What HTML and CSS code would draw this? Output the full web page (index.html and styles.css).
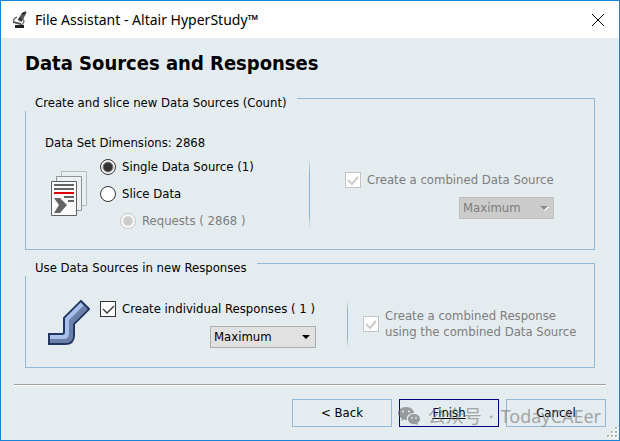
FILE: index.html
```html
<!DOCTYPE html>
<html lang="en">
<head>
  <meta charset="utf-8">
  <title>File Assistant - Altair HyperStudy</title>
  <link rel="stylesheet" href="styles.css">
</head>
<body>
  <div class="window">
    <header class="titlebar">
      <svg class="app-icon" width="16" height="18" viewBox="0 0 16 18">
        <path d="M10 2l4-2 .5 2-5 9-4-2z" fill="#555"/>
        <path d="M10 3l3-1.500M7 7l3 2" stroke="#222" stroke-width="1.500" fill="none"/>
        <path d="M5 6c-4 2-4 4-3 5M11 8c2 3 0 5-2 6" stroke="#777" stroke-width="1.500" fill="none"/>
        <path d="M1 10l8 2v2l-8-2z" fill="#555"/>
        <path d="M3 14h9v3H3z" fill="#222"/>
      </svg>
      <span class="caption">File Assistant - Altair HyperStudy™</span>
      <button type="button" class="close" aria-label="Close">
        <svg width="12" height="12" viewBox="0 0 12 12"><path d="M0 0l12 12M12 0L0 12" stroke="#000" stroke-width="1"/></svg>
      </button>
    </header>

    <form class="content">
      <h1>Data Sources and Responses</h1>

      <fieldset class="group">
        <legend>Create and slice new Data Sources (Count)</legend>
        <p class="dimensions">Data Set Dimensions: 2868</p>
        <div class="row sources">
          <svg class="picture docs" width="38" height="46" viewBox="0 0 38 46">
            <path d="M11.500.5h25v34h-25z" fill="#e9eef1" stroke="#b5babd"/>
            <path d="M6.500 5.500h25v34h-25z" fill="#eef1f3" stroke="#8f9395"/>
            <path d="M1.500 10.500h25v34h-25z" fill="#fafafa" stroke="#606060"/>
            <path d="M4 13h20v2H4zM4 17h20v2H4zM14 25h10v2H14zM18 29h6v2h-6z" fill="#646464"/>
            <path d="M4 21h20v2H4z" fill="#e00000"/>
            <path d="M4 27h6l7 7-7 8H4l5-8z" fill="#646464"/>
          </svg>
          <div class="options">
            <label class="option"><input type="radio" name="source" checked>Single Data Source (1)</label>
            <label class="option"><input type="radio" name="source">Slice Data</label>
            <label class="option nested disabled"><input type="radio" name="requests" checked disabled>Requests ( 2868 )</label>
          </div>
          <div class="divider"></div>
          <div class="combined">
            <label class="option disabled"><input type="checkbox" checked disabled>Create a combined Data Source</label>
            <div class="select narrow">
              <select aria-label="Combined source type" disabled><option>Maximum</option></select>
              <svg width="9" height="6" viewBox="0 0 9 6"><path d="M1 2h8L5 6z" fill="#fff"/><path d="M0 1h8L4 5z" fill="#8a8a8a"/></svg>
            </div>
          </div>
        </div>
      </fieldset>

      <fieldset class="group">
        <legend>Use Data Sources in new Responses</legend>
        <div class="row responses">
          <svg class="picture" width="42" height="46" viewBox="0 0 42 46">
            <path d="M1 34h13q2 0 2-2V18L33 1l8 8-15 15v11q0 9-9 9H1z" fill="#7389b5" stroke="#22365f" stroke-width="2"/>
            <path d="M2 37h13q4 0 4-4V19L34 4" fill="none" stroke="#a9bfec" stroke-width="4"/>
            <path d="M2 41h15q6 0 6-6V23L38 8" fill="none" stroke="#6a80ab" stroke-width="4"/>
          </svg>
          <div class="individual">
            <label class="option"><input type="checkbox" checked>Create individual Responses ( 1 )</label>
            <div class="select">
              <select aria-label="Response type"><option>Maximum</option></select>
              <svg width="9" height="6" viewBox="0 0 9 6"><path d="M0 1h8L4 5z" fill="#000"/></svg>
            </div>
          </div>
          <div class="divider"></div>
          <label class="option disabled two-line"><input type="checkbox" checked disabled><span>Create a combined Response<br>using the combined Data Source</span></label>
        </div>
      </fieldset>

      <footer class="buttons">
        <button type="button">&lt; Back</button>
        <button type="submit" class="default">Finish</button>
        <button type="button">Cancel</button>
      </footer>
    </form>

    <div class="watermark">
      <svg width="24" height="20" viewBox="0 0 24 20">
        <path fill-rule="evenodd" d="M9 1c5 0 8 3 8 6-5 0-8 3-7 7-1 0-2 0-3-.5L4 15l1-2.500C2 11 1 9 1 7.500 1 4 4 1 9 1zM6 4.500a1 1 0 100 2 1 1 0 000-2zm6 0a1 1 0 100 2 1 1 0 000-2z"/>
        <path fill-rule="evenodd" d="M17 8c4 0 6 2.500 6 5 0 1.500-1 3-2.500 4l.5 2-2.500-1c-4 1-7.500-1.500-7.500-5 0-2.500 2.500-5 6-5zm-2 3a.9.9 0 100 1.800.9.9 0 000-1.800zm4 0a.9.9 0 100 1.800.9.9 0 000-1.800z"/>
      </svg>
      <span>公众号</span>
      <span>·</span>
      <span>TodayCAEer</span>
    </div>
    <svg class="grip" width="14" height="14" viewBox="0 0 14 14">
      <path d="M10 1h3v3h-3zM6 5h3v3H6zM10 5h3v3h-3zM2 9h3v3H2zM6 9h3v3H6zM10 9h3v3h-3z" fill="#fff"/>
      <path d="M10 1h2v2h-2zM6 5h2v2H6zM10 5h2v2h-2zM2 9h2v2H2zM6 9h2v2H6zM10 9h2v2h-2z" fill="#b8b4a2"/>
    </svg>
  </div>
</body>
</html>
```
FILE: styles.css
```css
* {
  box-sizing: border-box;
}

body {
  margin: 0;
  font-family: "DejaVu Sans Condensed", "DejaVu Sans", sans-serif;
  font-size: 13px;
  line-height: 16px;
  color: #000;
}

.window {
  position: relative;
  display: flex;
  flex-direction: column;
  min-height: 100vh;
  border: 1px solid #1883d7;
  background-color: #e5ecef;
}

.titlebar {
  display: flex;
  align-items: center;
  height: 37px;
  padding: 0 15px 0 11px;
  background-color: #fff;
}

.caption {
  flex: 1;
  margin-left: 7px;
  font-family: "Noto Sans", "Open Sans", sans-serif;
  font-size: 14px;
}

.close {
  display: flex;
  padding: 0;
  border: none;
  background: none;
}

.content {
  padding: 0 13px;
}

h1 {
  margin: 12px 11px 9px;
  font-size: 20px;
  line-height: 26px;
}

/* group boxes */
.group {
  margin: 0 11px;
  padding: 0;
  border: 1px solid #93b9d5;
}

legend {
  margin-left: -1px;
  padding: 10px 10px 0;
}

.dimensions {
  margin: 24px 19px 0;
}

.row {
  display: flex;
  align-items: flex-start;
}

.sources {
  padding: 7px 0 20px 24px;
}

.responses {
  padding: 24px 0 19px 22px;
}

.docs {
  margin: 13px 0 0;
}

.option {
  display: flex;
  align-items: center;
  gap: 6px;
}

.options {
  display: flex;
  flex-direction: column;
  gap: 11px;
  width: 221px;
  padding: 1px 0 0 12px;
}

.nested {
  margin-left: 20px;
}

.disabled {
  color: #7d7d7d;
}

.divider {
  width: 1px;
  align-self: stretch;
  background: linear-gradient(transparent, #8fb3cb 20%, #8fb3cb 80%, transparent);
}

.combined {
  padding: 14px 0 0 35px;
}

.individual {
  width: 257px;
  padding: 1px 0 0 10px;
}

.two-line {
  padding: 8px 0 0 15px;
}

/* inputs */
input {
  flex: none;
  appearance: none;
  width: 16px;
  height: 16px;
  margin: 0;
  border: 1px solid #333;
  background-color: #fff;
}

input[type="radio"] {
  border-radius: 50%;
}

input[type="radio"]:checked {
  background-image: radial-gradient(circle, #333 4px, transparent 6px);
}

input[type="checkbox"]:checked {
  background-image: url("data:image/svg+xml,%3Csvg xmlns='http://www.w3.org/2000/svg' viewBox='0 0 14 14'%3E%3Cpath d='M2 7l4 4 7-7' fill='none' stroke='%23333' stroke-width='1.300'/%3E%3C/svg%3E");
}

input:disabled {
  border-color: #c4c4c4;
}

input[type="radio"]:disabled {
  background-image: radial-gradient(circle, #ccc 4px, transparent 6px);
}

input[type="checkbox"]:disabled {
  background-image: url("data:image/svg+xml,%3Csvg xmlns='http://www.w3.org/2000/svg' viewBox='0 0 14 14'%3E%3Cpath d='M2 7l4 4 6-7' fill='none' stroke='%23ccc' stroke-width='2'/%3E%3C/svg%3E");
}

.select {
  position: relative;
  width: 106px;
  margin: 9px 0 0 110px;
}

.select.narrow {
  width: 95px;
  margin-left: 114px;
}

.select svg {
  position: absolute;
  top: 8px;
  right: 5px;
}

select {
  display: block;
  appearance: none;
  width: 100%;
  height: 22px;
  padding: 0 3px;
  border: 1px solid #adadad;
  border-radius: 0;
  background-color: #e1e1e1;
  font: inherit;
  color: #000;
}

select:disabled {
  border-color: #bfbfbf;
  background-color: #ccc;
  color: #7d7d7d;
  opacity: 1;
}

/* bottom bar */
.buttons {
  display: flex;
  justify-content: flex-end;
  gap: 7px;
  margin-top: 16px;
  padding-top: 14px;
  border-top: 1px solid #a0a0a0;
  box-shadow: inset 0 1px #fff;
}

.buttons button {
  width: 100px;
  height: 28px;
  border: 1px solid #93b9d5;
  background-color: transparent;
  font: inherit;
}

.buttons .default {
  border-color: #000080;
  text-decoration: underline;
}

.watermark {
  position: absolute;
  right: 18px;
  bottom: 12px;
  display: flex;
  align-items: center;
  gap: 7px;
  font-family: "Noto Sans", "Noto Sans CJK SC", sans-serif;
  font-size: 18px;
  line-height: 24px;
  color: #777;
  opacity: 0.6;
  pointer-events: none;
}

.watermark svg {
  fill: #666;
}

.grip {
  position: absolute;
  right: 0;
  bottom: 0;
}
```
